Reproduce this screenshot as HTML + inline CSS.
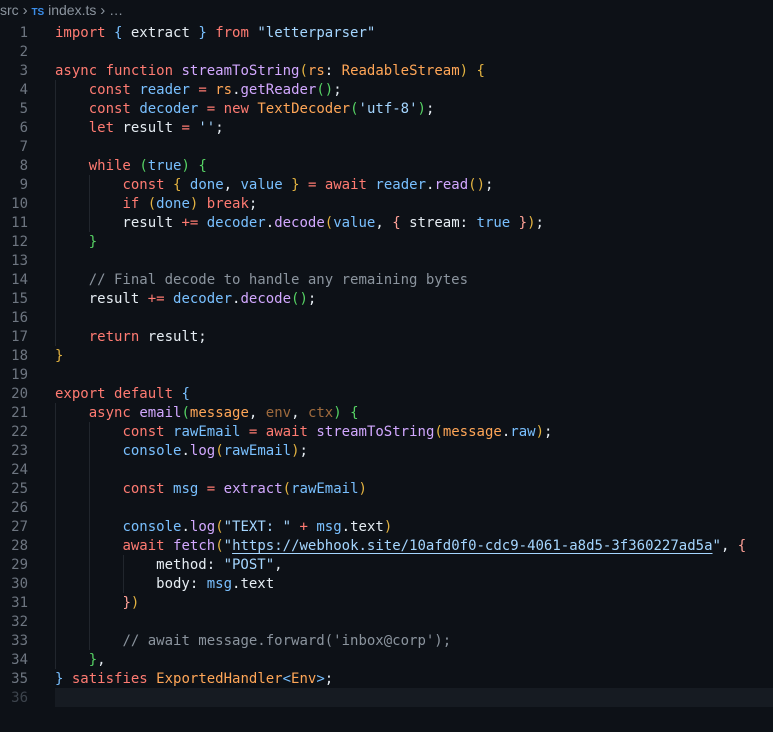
<!DOCTYPE html>
<html><head><meta charset="utf-8"><style>
html,body{margin:0;padding:0;background:#0d1117;width:773px;height:732px;overflow:hidden}
body{font-family:"DejaVu Sans Mono","Liberation Mono",monospace;font-size:14px;color:#e6edf3;position:relative}
.bc{position:absolute;left:0;top:2px;font-family:"Liberation Sans",sans-serif;font-size:14px;color:#8b949e;white-space:pre}
.bc .ts{color:#3b8eea;font-weight:bold;font-size:10px}
#c{position:absolute;left:0;top:24px;width:773px}
.r{height:19px;line-height:19px;white-space:pre;display:flex}
.n{width:28px;text-align:right;color:#6e7681;flex:none}
.x{margin-left:27px;white-space:pre}
.k{color:#ff7b72}.f{color:#d2a8ff}.v{color:#79c0ff}.s{color:#a5d6ff}.t{color:#ffa657}.c{color:#8b949e}
.p{color:#ffa657}.pd{color:#ffa657;opacity:.6}
.b0{color:#79c0ff}.b1{color:#56d364}.b2{color:#e3b341}.b3{color:#ffa198}
.g{position:absolute;width:1px;background:#21262d}
.u{text-decoration:underline;text-decoration-color:#a5d6ff;text-underline-offset:3px}
.hl{position:absolute;left:55px;right:0;top:688px;height:19px;background:#161b22}
</style></head><body>
<div class="bc">src <span style="font-size:15px">›</span> <span class="ts">TS</span> index.ts <span style="font-size:15px">›</span> …</div>
<div class="hl"></div>
<div class="g" style="left:55px;top:80px;height:266px"></div>
<div class="g" style="left:89px;top:175px;height:57px"></div>
<div class="g" style="left:55px;top:403px;height:266px"></div>
<div class="g" style="left:89px;top:422px;height:228px"></div>
<div class="g" style="left:123px;top:555px;height:38px"></div>
<div id="c">
<div class="r"><span class="n">1</span><span class="x"><span class="k">import</span> <span class="b0">{</span> extract <span class="b0">}</span> <span class="k">from</span> <span class="s">"letterparser"</span></span></div>
<div class="r"><span class="n">2</span><span class="x"></span></div>
<div class="r"><span class="n">3</span><span class="x"><span class="k">async</span> <span class="k">function</span> <span class="f">streamToString</span><span class="b2">(</span><span class="p">rs</span>: <span class="t">ReadableStream</span><span class="b2">)</span> <span class="b2">{</span></span></div>
<div class="r"><span class="n">4</span><span class="x">    <span class="k">const</span> <span class="v">reader</span> <span class="k">=</span> <span class="t">rs</span>.<span class="f">getReader</span><span class="b1">()</span>;</span></div>
<div class="r"><span class="n">5</span><span class="x">    <span class="k">const</span> <span class="v">decoder</span> <span class="k">=</span> <span class="k">new</span> <span class="t">TextDecoder</span><span class="b1">(</span><span class="s">'utf-8'</span><span class="b1">)</span>;</span></div>
<div class="r"><span class="n">6</span><span class="x">    <span class="k">let</span> result <span class="k">=</span> <span class="s">''</span>;</span></div>
<div class="r"><span class="n">7</span><span class="x"></span></div>
<div class="r"><span class="n">8</span><span class="x">    <span class="k">while</span> <span class="b1">(</span><span class="v">true</span><span class="b1">)</span> <span class="b1">{</span></span></div>
<div class="r"><span class="n">9</span><span class="x">        <span class="k">const</span> <span class="b2">{</span> <span class="v">done</span>, <span class="v">value</span> <span class="b2">}</span> <span class="k">=</span> <span class="k">await</span> <span class="v">reader</span>.<span class="f">read</span><span class="b2">()</span>;</span></div>
<div class="r"><span class="n">10</span><span class="x">        <span class="k">if</span> <span class="b2">(</span><span class="v">done</span><span class="b2">)</span> <span class="k">break</span>;</span></div>
<div class="r"><span class="n">11</span><span class="x">        result <span class="k">+=</span> <span class="v">decoder</span>.<span class="f">decode</span><span class="b2">(</span><span class="v">value</span>, <span class="b3">{</span> stream: <span class="v">true</span> <span class="b3">}</span><span class="b2">)</span>;</span></div>
<div class="r"><span class="n">12</span><span class="x">    <span class="b1">}</span></span></div>
<div class="r"><span class="n">13</span><span class="x"></span></div>
<div class="r"><span class="n">14</span><span class="x">    <span class="c">// Final decode to handle any remaining bytes</span></span></div>
<div class="r"><span class="n">15</span><span class="x">    result <span class="k">+=</span> <span class="v">decoder</span>.<span class="f">decode</span><span class="b1">()</span>;</span></div>
<div class="r"><span class="n">16</span><span class="x"></span></div>
<div class="r"><span class="n">17</span><span class="x">    <span class="k">return</span> result;</span></div>
<div class="r"><span class="n">18</span><span class="x"><span class="b2">}</span></span></div>
<div class="r"><span class="n">19</span><span class="x"></span></div>
<div class="r"><span class="n">20</span><span class="x"><span class="k">export</span> <span class="k">default</span> <span class="b0">{</span></span></div>
<div class="r"><span class="n">21</span><span class="x">    <span class="k">async</span> <span class="f">email</span><span class="b1">(</span><span class="p">message</span>, <span class="pd">env</span>, <span class="pd">ctx</span><span class="b1">)</span> <span class="b1">{</span></span></div>
<div class="r"><span class="n">22</span><span class="x">        <span class="k">const</span> <span class="v">rawEmail</span> <span class="k">=</span> <span class="k">await</span> <span class="f">streamToString</span><span class="b2">(</span><span class="p">message</span>.<span class="v">raw</span><span class="b2">)</span>;</span></div>
<div class="r"><span class="n">23</span><span class="x">        <span class="v">console</span>.<span class="f">log</span><span class="b2">(</span><span class="v">rawEmail</span><span class="b2">)</span>;</span></div>
<div class="r"><span class="n">24</span><span class="x"></span></div>
<div class="r"><span class="n">25</span><span class="x">        <span class="k">const</span> <span class="v">msg</span> <span class="k">=</span> <span class="f">extract</span><span class="b2">(</span><span class="v">rawEmail</span><span class="b2">)</span></span></div>
<div class="r"><span class="n">26</span><span class="x"></span></div>
<div class="r"><span class="n">27</span><span class="x">        <span class="v">console</span>.<span class="f">log</span><span class="b2">(</span><span class="s">"TEXT: "</span> <span class="k">+</span> <span class="v">msg</span>.text<span class="b2">)</span></span></div>
<div class="r"><span class="n">28</span><span class="x">        <span class="k">await</span> <span class="f">fetch</span><span class="b2">(</span><span class="s">"<span class="u">https://webhook.site/10afd0f0-cdc9-4061-a8d5-3f360227ad5a</span>"</span>, <span class="b3">{</span></span></div>
<div class="r"><span class="n">29</span><span class="x">            method: <span class="s">"POST"</span>,</span></div>
<div class="r"><span class="n">30</span><span class="x">            body: <span class="v">msg</span>.text</span></div>
<div class="r"><span class="n">31</span><span class="x">        <span class="b3">}</span><span class="b2">)</span></span></div>
<div class="r"><span class="n">32</span><span class="x"></span></div>
<div class="r"><span class="n">33</span><span class="x">        <span class="c">// await message.forward('inbox@corp');</span></span></div>
<div class="r"><span class="n">34</span><span class="x">    <span class="b1">}</span>,</span></div>
<div class="r"><span class="n">35</span><span class="x"><span class="b0">}</span> <span class="k">satisfies</span> <span class="t">ExportedHandler</span><span class="b0">&lt;</span><span class="t">Env</span><span class="b0">&gt;</span>;</span></div>
<div class="r"><span class="n" style="color:#3d444d">36</span><span class="x"></span></div>
</div>
</body></html>
